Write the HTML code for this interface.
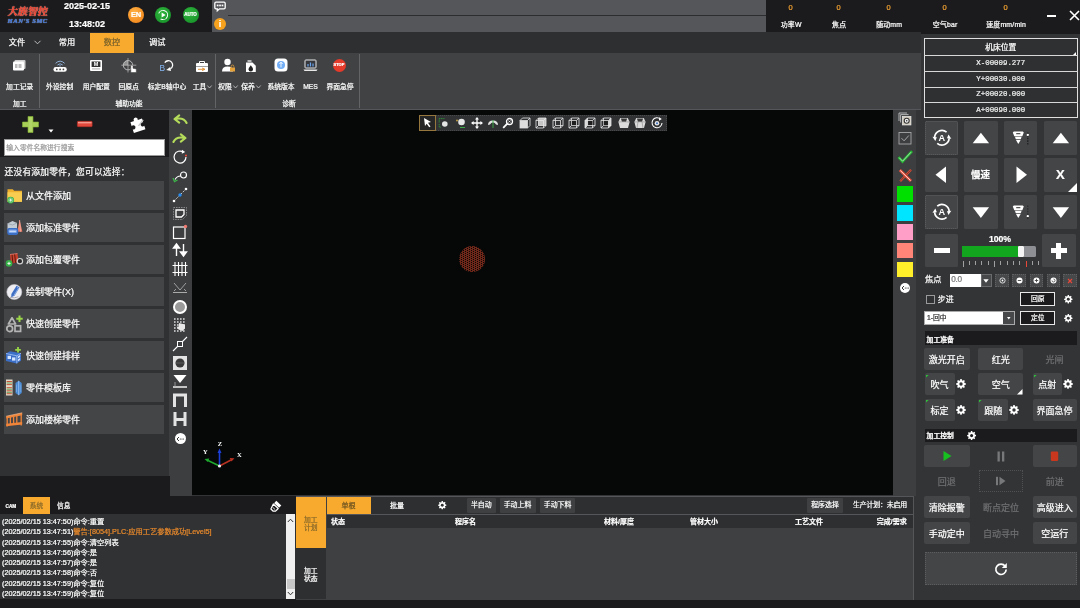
<!DOCTYPE html><html lang="zh"><head><meta charset="utf-8"><title>CNC</title><style>
*{box-sizing:border-box;margin:0;padding:0}
html,body{width:1080px;height:608px;overflow:hidden}
html{background:#333436}
body{position:relative;will-change:transform;font-family:"Liberation Sans","Noto Sans CJK SC",sans-serif;color:#fff;font-size:7px;line-height:1}
.a{position:absolute}
.d{background:#1b1b1d}
.t{position:absolute;white-space:nowrap;line-height:1;-webkit-text-stroke:0.22px}
.c{text-align:center}
.o{background:#f7aa2e}
.btn{position:absolute;background:#47484a;border-radius:2px;color:#fff;text-align:center;white-space:nowrap}
.mono{font-family:"Liberation Mono",monospace}
.serif{font-family:"Liberation Serif","Noto Serif CJK SC",serif}
svg{position:absolute;overflow:visible}
</style></head><body>
<div class="a d" style="left:0px;top:0px;width:1080px;height:32px;"></div>
<div class="a d" style="left:766px;top:0px;width:314px;height:32px;"></div>
<div class="a " style="left:212px;top:0px;width:554px;height:32.5px;background:#55565a"></div>
<div class="a " style="left:228px;top:15px;width:538px;height:1px;background:#2c2d2f"></div>
<div class="t serif" style="left:7.5px;top:6.5px;font-size:10px;color:#e8402d;font-weight:900;letter-spacing:0px;text-shadow:0 0 1px #fff;transform:skewX(-8deg)">大族智控</div>
<div class="t serif" style="left:7.5px;top:18px;font-size:6.6px;color:#3b6fd0;font-weight:bold;font-style:italic;letter-spacing:0.55px;text-shadow:0 0 1px #fff">HAN'S SMC</div>
<div class="t " style="left:62px;top:1.5px;font-size:9px;color:#fff;width:50px;text-align:center;font-weight:bold">2025-02-15</div>
<div class="t " style="left:62px;top:19.5px;font-size:9px;color:#fff;width:50px;text-align:center;font-weight:bold">13:48:02</div>
<div class="a" style="left:128px;top:6.5px;width:16px;height:16px;border-radius:50%;background:radial-gradient(circle at 40% 35%,#ffb347,#f07d12)"></div>
<div class="t " style="left:128px;top:11.4px;font-size:7.4px;color:#fff;width:16px;text-align:center;font-weight:bold;letter-spacing:-0.2px">EN</div>
<div class="a" style="left:154.5px;top:6.5px;width:16px;height:16px;border-radius:50%;background:radial-gradient(circle at 40% 35%,#2fb43c,#128c26)"></div>
<svg style="left:154.5px;top:6.5px" width="16" height="16" viewBox="0 0 16 16"><circle cx="8" cy="8" r="4.6" fill="none" stroke="#fff" stroke-width="1" stroke-dasharray="22 7" transform="rotate(200 8 8)"/><path d="M6.6 5.6 L10.6 8 L6.6 10.4Z" fill="#fff"/></svg>
<div class="a" style="left:182.5px;top:6.5px;width:16px;height:16px;border-radius:50%;background:radial-gradient(circle at 40% 35%,#2fb43c,#128c26)"></div>
<div class="t " style="left:182.5px;top:13.3px;font-size:4.5px;color:#fff;width:16px;text-align:center;font-weight:bold">AUTO</div>
<svg style="left:214px;top:1.4px" width="12" height="11" viewBox="0 0 12 11"><path d="M2 1.2h8a1.2 1.2 0 0 1 1.2 1.2v4.2a1.2 1.2 0 0 1-1.2 1.2H5.5L3.3 9.8V7.8H2A1.2 1.2 0 0 1 .8 6.6V2.4A1.2 1.2 0 0 1 2 1.2Z" fill="none" stroke="#fff" stroke-width="1.300"/><rect x="2.800" y="3.600" width="1.700" height="1.700" fill="#fff"/><rect x="5.200" y="3.600" width="1.700" height="1.700" fill="#fff"/><rect x="7.600" y="3.600" width="1.700" height="1.700" fill="#fff"/></svg>
<div class="a" style="left:214px;top:18.3px;width:12px;height:12px;border-radius:50%;background:#f6a21e"></div>
<div class="t " style="left:214px;top:19.5px;font-size:9px;color:#fff;width:12px;text-align:center;font-weight:bold">i</div>
<div class="t " style="left:760.5px;top:3.8px;font-size:7.5px;color:#f0a030;width:60px;text-align:center;">0</div>
<div class="t " style="left:761.2px;top:21.8px;font-size:6.9px;color:#fff;width:60px;text-align:center;letter-spacing:0.2px">功率W</div>
<div class="t " style="left:808.5px;top:3.8px;font-size:7.5px;color:#f0a030;width:60px;text-align:center;">0</div>
<div class="t " style="left:809.2px;top:21.8px;font-size:6.9px;color:#fff;width:60px;text-align:center;letter-spacing:0.2px">焦点</div>
<div class="t " style="left:858.5px;top:3.8px;font-size:7.5px;color:#f0a030;width:60px;text-align:center;">0</div>
<div class="t " style="left:859.2px;top:21.8px;font-size:6.9px;color:#fff;width:60px;text-align:center;letter-spacing:0.2px">随动mm</div>
<div class="t " style="left:914.5px;top:3.8px;font-size:7.5px;color:#f0a030;width:60px;text-align:center;">0</div>
<div class="t " style="left:915.2px;top:21.8px;font-size:6.9px;color:#fff;width:60px;text-align:center;letter-spacing:0.2px">空气bar</div>
<div class="t " style="left:975.5px;top:3.8px;font-size:7.5px;color:#f0a030;width:60px;text-align:center;">0</div>
<div class="t " style="left:976.2px;top:21.8px;font-size:6.9px;color:#fff;width:60px;text-align:center;letter-spacing:0.2px">速度mm/min</div>
<div class="a " style="left:1047px;top:15px;width:9px;height:2px;background:#fff"></div>
<svg style="left:1069px;top:10px" width="11" height="11" viewBox="0 0 11 11"><path d="M1 1L10 10M10 1L1 10" stroke="#fff" stroke-width="1.6"/></svg>
<div class="a " style="left:0px;top:32px;width:1080px;height:21px;background:#2e2f31"></div>
<div class="t " style="left:8.8px;top:38.5px;font-size:8.2px;color:#fff;">文件</div>
<svg style="left:34px;top:40px" width="7" height="5" viewBox="0 0 7 5"><path d="M0.5 0.8L3.5 3.8L6.5 0.8" fill="none" stroke="#ccc" stroke-width="0.9"/></svg>
<div class="t " style="left:58.8px;top:38.5px;font-size:8.2px;color:#fff;">常用</div>
<div class="a o" style="left:90px;top:33px;width:44px;height:20px;"></div>
<div class="t " style="left:90px;top:38.5px;font-size:8.2px;color:#77602a;width:44px;text-align:center;">数控</div>
<div class="t " style="left:149px;top:38.5px;font-size:8.2px;color:#fff;">调试</div>
<div class="a " style="left:0px;top:53px;width:921px;height:56px;background:#414244"></div>
<div class="a " style="left:0px;top:109px;width:921px;height:1px;background:#55565a"></div>
<div class="a " style="left:39.3px;top:54px;width:1.2px;height:54px;background:#636466"></div>
<div class="a " style="left:215.3px;top:54px;width:1.2px;height:54px;background:#636466"></div>
<div class="a " style="left:359.3px;top:54px;width:1.2px;height:54px;background:#636466"></div>
<div class="t " style="left:-20.3px;top:83.5px;font-size:6.8px;color:#fff;width:80px;text-align:center;">加工记录</div>
<div class="t " style="left:-20.3px;top:100.6px;font-size:6.8px;color:#fff;width:80px;text-align:center;">加工</div>
<div class="t " style="left:19.6px;top:83.5px;font-size:6.8px;color:#fff;width:80px;text-align:center;">外设控制</div>
<div class="t " style="left:56.3px;top:83.5px;font-size:6.8px;color:#fff;width:80px;text-align:center;">用户配置</div>
<div class="t " style="left:88.69999999999999px;top:83.5px;font-size:6.8px;color:#fff;width:80px;text-align:center;">回原点</div>
<div class="t " style="left:127px;top:83.5px;font-size:6.8px;color:#fff;width:80px;text-align:center;">标定B轴中心</div>
<div class="t " style="left:159.5px;top:83.5px;font-size:6.8px;color:#fff;width:80px;text-align:center;">工具</div>
<svg style="left:207px;top:85px" width="5" height="4" viewBox="0 0 5 4"><path d="M0.3 0.5L2.5 3L4.7 0.5" fill="none" stroke="#ddd" stroke-width="0.7"/></svg>
<div class="t " style="left:89px;top:100.6px;font-size:6.8px;color:#fff;width:80px;text-align:center;">辅助功能</div>
<div class="t " style="left:185px;top:83.5px;font-size:6.8px;color:#fff;width:80px;text-align:center;">权限</div>
<svg style="left:233px;top:85px" width="5" height="4" viewBox="0 0 5 4"><path d="M0.3 0.5L2.5 3L4.7 0.5" fill="none" stroke="#ddd" stroke-width="0.7"/></svg>
<div class="t " style="left:208px;top:83.5px;font-size:6.8px;color:#fff;width:80px;text-align:center;">保养</div>
<svg style="left:256px;top:85px" width="5" height="4" viewBox="0 0 5 4"><path d="M0.3 0.5L2.5 3L4.7 0.5" fill="none" stroke="#ddd" stroke-width="0.7"/></svg>
<div class="t " style="left:241px;top:83.5px;font-size:6.8px;color:#fff;width:80px;text-align:center;">系统版本</div>
<div class="t " style="left:270.5px;top:83.5px;font-size:6.8px;color:#fff;width:80px;text-align:center;">MES</div>
<div class="t " style="left:300px;top:83.5px;font-size:6.8px;color:#fff;width:80px;text-align:center;">界面急停</div>
<div class="t " style="left:249px;top:100.6px;font-size:6.8px;color:#fff;width:80px;text-align:center;">诊断</div>
<svg style="left:12px;top:59px" width="14" height="13" viewBox="0 0 14 13"><rect x="2.5" y="1" width="11" height="9" rx="1" fill="#cfcfcf"/><rect x="1" y="2.5" width="11" height="9" rx="1" fill="#fff"/><path d="M3 6h2.5M6.5 6h3M3 8h2.5M6.5 8h3" stroke="#555" stroke-width="0.8"/></svg>
<svg style="left:52.5px;top:58.5px" width="14" height="13" viewBox="0 0 14 13"><rect x="0.400" y="8" width="13.400" height="4.800" rx="2.400" fill="#fff"/><circle cx="3.800" cy="10.400" r="0.850" fill="#444"/><circle cx="7.100" cy="10.400" r="0.850" fill="#444"/><circle cx="10.400" cy="10.400" r="0.850" fill="#444"/><path d="M2.600 4.300Q7.100 0 11.600 4.300" fill="none" stroke="#8fb0d8" stroke-width="1"/><path d="M4.500 6Q7.100 3.500 9.700 6" fill="none" stroke="#8fb0d8" stroke-width="1"/><circle cx="7.100" cy="6.900" r="0.700" fill="#8fb0d8"/></svg>
<svg style="left:89px;top:59px" width="14" height="13" viewBox="0 0 14 13"><rect x="1" y="1" width="12" height="11" rx="1" fill="#fff"/><rect x="2.6" y="2.5" width="8.8" height="5.5" fill="#333"/><text x="7" y="7.4" font-size="5.5" font-weight="bold" fill="#fff" text-anchor="middle" font-family="Liberation Sans,sans-serif">M</text><rect x="3" y="9.3" width="8" height="1.2" fill="#bbb"/></svg>
<svg style="left:121px;top:57.5px" width="16" height="15" viewBox="0 0 16 15"><circle cx="7" cy="7.200" r="4.700" fill="none" stroke="#c4c4c4" stroke-width="0.900"/><path d="M7 0v14.500M0.300 7.200h15" stroke="#b0b0b0" stroke-width="0.800"/><path d="M7 7.200V2.500A4.700 4.700 0 0 0 2.300 7.200Z" fill="#d0d0d0" opacity="0.550"/><path d="M9.800 8.200v6.300h5.500v-3.600l-3.300-.6V8.200a1.100 1.100 0 0 0-2.200 0Z" fill="#fff" stroke="#3a3a3a" stroke-width="0.500"/></svg>
<svg style="left:159px;top:57.5px" width="16" height="15" viewBox="0 0 16 15"><path d="M5.800 4.600A4.300 4.300 0 1 1 11.400 10.800" fill="none" stroke="#fff" stroke-width="1.300"/><path d="M7.200 11.900l4-2.900.8 4Z" fill="#fff"/><text x="0.400" y="13" font-size="8.400" fill="#86b8f4" font-family="Liberation Sans,sans-serif">B</text></svg>
<svg style="left:195px;top:60px" width="14" height="13" viewBox="0 0 14 13"><rect x="1" y="3" width="12" height="9" rx="1" fill="#fff"/><path d="M4.5 3V1.5h5V3" fill="none" stroke="#fff" stroke-width="1"/><rect x="1" y="6.2" width="12" height="0.8" fill="#888"/><path d="M3 9.3h6M7 8l3 1.3-3 1.3" stroke="#e08a2a" stroke-width="0.9" fill="none"/></svg>
<svg style="left:221px;top:58px" width="15" height="15" viewBox="0 0 15 15"><circle cx="6.5" cy="4" r="3.2" fill="#fff"/><path d="M1 13.5q0-5 5.5-5t5.5 5Z" fill="#fff"/><rect x="9" y="9.5" width="5" height="4" fill="#e6a23a"/><path d="M10.2 9.5v-1.2a1.3 1.3 0 0 1 2.6 0v1.2" fill="none" stroke="#e6a23a" stroke-width="0.7"/></svg>
<svg style="left:245px;top:59px" width="12" height="14" viewBox="0 0 12 14"><path d="M1 3.5h6.5L10.8 6.8V13H1Z" fill="#fff"/><rect x="2.5" y="1" width="4" height="2" fill="#bbb"/><path d="M5.8 6.2q2.2 2.6 2.2 4a2.2 2.2 0 0 1-4.4 0q0-1.4 2.2-4Z" fill="#222"/></svg>
<svg style="left:274px;top:58px" width="14" height="14" viewBox="0 0 14 14"><rect x="0.5" y="0.5" width="13" height="13" rx="3.5" fill="#fff"/><circle cx="7" cy="7" r="4" fill="#72aef5"/><path d="M7 4.2v5.2M5.4 6L7 4.2L8.6 6" stroke="#fff" stroke-width="0.9" fill="none"/></svg>
<svg style="left:303px;top:59px" width="15" height="13" viewBox="0 0 15 13"><rect x="2" y="1" width="11" height="8" rx="0.8" fill="#35373c" stroke="#e8e8e8" stroke-width="1"/><path d="M0.5 10.5h14l-1 1.5h-12Z" fill="#e8e8e8"/><path d="M5 7.5V5M7.5 7.5V3.5M10 7.5V4.5" stroke="#6aa5ee" stroke-width="1.2"/></svg>
<div class="a" style="left:332.5px;top:58.5px;width:13px;height:13px;border-radius:50%;background:#e63a2b"></div>
<div class="t " style="left:332.5px;top:63px;font-size:4px;color:#fff;width:13px;text-align:center;font-weight:bold">STOP</div>
<div class="a " style="left:0px;top:110px;width:169px;height:386px;background:#303133"></div>
<div class="a d" style="left:0px;top:109.5px;width:169px;height:47.5px;"></div>
<svg style="left:22px;top:116px" width="17" height="17" viewBox="0 0 17 17"><path d="M6 0.5h5v5.5h5.5v5H11v5.5H6V11H0.5V6H6Z" fill="#a8cf58" stroke="#86b336" stroke-width="0.600"/><path d="M7 1.500h3v14h-3Z" fill="#b9dc74" opacity="0.500"/></svg>
<svg style="left:48px;top:129px" width="6" height="4" viewBox="0 0 6 4"><path d="M0.5 0.5h5L3 3.5Z" fill="#fff"/></svg>
<svg style="left:76.5px;top:120.7px" width="16" height="6" viewBox="0 0 16 6"><rect x="0.300" y="0.300" width="14.900" height="5.400" rx="0.800" fill="#e2483c" stroke="#b02a22" stroke-width="0.500"/><rect x="1" y="0.900" width="13.500" height="1.500" fill="#f39a8e"/></svg>
<svg style="left:129.5px;top:116px" width="15" height="16" viewBox="0 0 15 16"><g transform="rotate(-18 7.500 8)"><path d="M5.200 4.200a2.100 2.100 0 1 1 3.800 0H13.400v4a2.100 2.100 0 1 0 0 3.600V15.500H1.300v-3.800a2.100 2.100 0 1 0 0-3.400V4.200Z" fill="#fff"/></g><path d="M13.200 3.800L8.500 9.800" stroke="#c4c4c4" stroke-width="1.300"/></svg>
<div class="a " style="left:4px;top:139px;width:161px;height:17px;background:#fff;border:1px solid #9a9a9a"></div>
<div class="t " style="left:6.3px;top:145px;font-size:6.8px;color:#9a9a9a;">输入零件名称进行搜索</div>
<div class="t " style="left:4.5px;top:168.4px;font-size:8.7px;color:#fff;letter-spacing:0.25px">还没有添加零件，您可以选择：</div>
<div class="a " style="left:4px;top:181px;width:160px;height:29px;background:#444547"></div>
<div class="t " style="left:26px;top:191.8px;font-size:9px;color:#fff;">从文件添加</div>
<div class="a " style="left:4px;top:213px;width:160px;height:29px;background:#444547"></div>
<div class="t " style="left:26px;top:223.8px;font-size:9px;color:#fff;">添加标准零件</div>
<div class="a " style="left:4px;top:245px;width:160px;height:29px;background:#444547"></div>
<div class="t " style="left:26px;top:255.8px;font-size:9px;color:#fff;">添加包覆零件</div>
<div class="a " style="left:4px;top:277px;width:160px;height:29px;background:#444547"></div>
<div class="t " style="left:26px;top:287.8px;font-size:9px;color:#fff;">绘制零件(X)</div>
<div class="a " style="left:4px;top:309px;width:160px;height:29px;background:#444547"></div>
<div class="t " style="left:26px;top:319.8px;font-size:9px;color:#fff;">快速创建零件</div>
<div class="a " style="left:4px;top:341px;width:160px;height:29px;background:#444547"></div>
<div class="t " style="left:26px;top:351.8px;font-size:9px;color:#fff;">快速创建排样</div>
<div class="a " style="left:4px;top:373px;width:160px;height:29px;background:#444547"></div>
<div class="t " style="left:26px;top:383.8px;font-size:9px;color:#fff;">零件模板库</div>
<div class="a " style="left:4px;top:405px;width:160px;height:29px;background:#444547"></div>
<div class="t " style="left:26px;top:415.8px;font-size:9px;color:#fff;">添加楼梯零件</div>
<svg style="left:5px;top:186.5px" width="18" height="18" viewBox="0 0 18 18"><path d="M2.500 2.200h5.200l1.500 1.600H17V14.800H2.500Z" fill="#eeb02e"/><path d="M2.500 5.200H17v9.600H2.500Z" fill="#f8cc50"/><circle cx="5.700" cy="13.100" r="3.400" fill="#35b046"/><circle cx="5.700" cy="13.100" r="2.300" fill="none" stroke="#bfe8c4" stroke-width="0.500"/><path d="M5.700 11.500v3.200M4.100 13.100h3.200" stroke="#fff" stroke-width="0.900"/></svg>
<svg style="left:5px;top:218.5px" width="18" height="18" viewBox="0 0 18 18"><path d="M2.500 4.500l5-2.400 4.500 1.800v6.800H2.500Z" fill="#c4ccd4"/><path d="M2.500 4.500l5 1.500 4.500-2.100" fill="none" stroke="#8a949e" stroke-width="0.600"/><path d="M14.600 1l2.800 11.700h-5.200Z" fill="#e77f6a"/><path d="M14.600 1l.9 11.700" stroke="#f5b3a4" stroke-width="0.800"/><rect x="2.200" y="8.900" width="11" height="7" rx="1.800" fill="#3c6fc6"/><rect x="3.600" y="10.500" width="8.200" height="3.600" rx="1" fill="#7fa8ea"/><path d="M4.500 12.300h6.400" stroke="#e4eeff" stroke-width="0.900"/></svg>
<svg style="left:5px;top:250.5px" width="18" height="18" viewBox="0 0 18 18"><path d="M5 3.500l7.500-1 1.200 8.500-7.800 1.800Z" fill="#c7412d"/><path d="M7 3.300l.9 9M9.600 2.900l1 9" stroke="#5e1a10" stroke-width="1"/><path d="M5 3.500l7.500-1" stroke="#ef8a78" stroke-width="0.700"/><circle cx="14.900" cy="10.200" r="2.700" fill="#2a2a2a" stroke="#cfcfcf" stroke-width="1.200"/><circle cx="4" cy="12.400" r="3.300" fill="#35b046"/><path d="M4 10.800v3.200M2.400 12.400h3.200" stroke="#fff" stroke-width="0.900"/></svg>
<svg style="left:5px;top:282.5px" width="18" height="18" viewBox="0 0 18 18"><circle cx="9.300" cy="9" r="7.500" fill="#eeeef2"/><circle cx="9.300" cy="9" r="7.500" fill="none" stroke="#c8c8d0" stroke-width="0.600"/><path d="M11.500 2.800l3 1.800-5 8.200-3.300 1.500.2-3.400Z" fill="#3f6fc4"/><path d="M12 4.300l1.500.9-4.600 7.300" fill="none" stroke="#a9c4f0" stroke-width="0.700"/><path d="M5 14.300q4.500 1.300 8.500-.6" stroke="#9a9aa4" stroke-width="0.800" fill="none"/></svg>
<svg style="left:5px;top:314.5px" width="18" height="18" viewBox="0 0 18 18"><path d="M7 2.800l3.600 6.200H3.400Z" fill="none" stroke="#b4b4b4" stroke-width="1.700" stroke-linejoin="round"/><circle cx="4.700" cy="13.700" r="2.900" fill="none" stroke="#b4b4b4" stroke-width="1.700"/><rect x="10" y="10.800" width="5.600" height="5.600" fill="none" stroke="#b4b4b4" stroke-width="1.700"/><path d="M14.500 0.500v6.400M11.300 3.700h6.400" stroke="#9ad648" stroke-width="2"/></svg>
<svg style="left:5px;top:346.5px" width="18" height="18" viewBox="0 0 18 18"><path d="M1 6.500l4-2.300 11 2v7.600l-4.200 2.600L1 14Z" fill="#3b6fc7"/><path d="M1 6.500l10.800 2.300V16.400" fill="none" stroke="#a9c6f6" stroke-width="0.800"/><path d="M11.800 8.800L16 6.200" stroke="#a9c6f6" stroke-width="0.800"/><rect x="2.600" y="8.800" width="3.400" height="3.200" fill="#d4e3ff"/><rect x="7" y="10.400" width="3.400" height="3.200" fill="#d4e3ff"/><path d="M12.800 9.500l2.300-1.400v2l-2.300 1.400ZM12.800 12.500l2.300-1.400v2l-2.300 1.400Z" fill="#d4e3ff"/><path d="M13 0v5.600M10.200 2.800h5.600" stroke="#9ad648" stroke-width="1.800"/></svg>
<svg style="left:5px;top:378.5px" width="18" height="18" viewBox="0 0 18 18"><rect x="1" y="0.500" width="6.500" height="16" fill="#ddd8c8"/><path d="M1.600 2.500h5.300M1.600 5.600h5.300M1.600 8.700h5.300M1.600 11.800h5.300M1.600 14.700h5.300" stroke="#c4553a" stroke-width="1"/><path d="M1.600 4h5.300M1.600 10.200h5.300M1.600 13.300h5.300" stroke="#5b9a4c" stroke-width="0.900"/><path d="M10.500 4l3.200-2.200 3 2.200v10l-3 2.200-3.200-2.200Z" fill="#4a8bd6"/><path d="M13.700 1.800v14.400" stroke="#b4d3f7" stroke-width="0.700"/><path d="M11.500 5.500v7.500M15.800 5.500v7.500" stroke="#8ab8ee" stroke-width="0.600"/></svg>
<svg style="left:5px;top:410.5px" width="18" height="18" viewBox="0 0 18 18"><path d="M1.200 5.200L17.200 1.800v2.400L1.200 7.600Z" fill="#f0853a"/><path d="M1.200 12.800L17.200 11v2.400L1.200 15.200Z" fill="#f0853a"/><path d="M2.200 6v9.500M5.400 6v7.500M8.600 5.500v7.500M11.800 4.800v7.700M16.200 3v11.500" stroke="#f0853a" stroke-width="1.300"/><path d="M1.200 5.200L17.200 1.800" stroke="#f9c39a" stroke-width="0.600"/></svg>
<div class="a " style="left:169px;top:110px;width:23px;height:386px;background:#3d3e40"></div>
<svg style="left:172px;top:111px" width="16" height="16" viewBox="0 0 16 16"><path d="M7.200 4.300L2.500 8l4.700 3.600M2.800 8Q12 6 14.600 12" fill="none" stroke="#b4dc5a" stroke-width="2.100" stroke-linecap="round" stroke-linejoin="round"/></svg>
<svg style="left:172px;top:130px" width="16" height="16" viewBox="0 0 16 16"><path d="M8.800 4.300L13.500 8l-4.700 3.600M13.200 8Q4 6 1.400 12" fill="none" stroke="#b4dc5a" stroke-width="2.100" stroke-linecap="round" stroke-linejoin="round"/></svg>
<svg style="left:172px;top:149px" width="16" height="16" viewBox="0 0 16 16"><path d="M11.5 3.2A6 6 0 1 0 14 8" fill="none" stroke="#fff" stroke-width="1.2"/><path d="M10 0.8l3.2 2.2-3.4 1.8Z" fill="#fff"/><circle cx="14" cy="6.5" r="1.1" fill="#e8483a"/></svg>
<svg style="left:172px;top:169.3px" width="16" height="16" viewBox="0 0 16 16"><circle cx="11.5" cy="6" r="3" fill="none" stroke="#fff" stroke-width="1.2"/><path d="M8.5 7Q5 7 3 10.5" fill="none" stroke="#fff" stroke-width="1.2"/><path d="M1 9l1.5 3.5 3-1.5" fill="none" stroke="#3db54a" stroke-width="1.3"/></svg>
<svg style="left:172px;top:187px" width="16" height="16" viewBox="0 0 16 16"><path d="M2 14L14 2" stroke="#ddd" stroke-width="0.9" stroke-dasharray="2 1.2"/><circle cx="2" cy="14" r="1.3" fill="#fff"/><circle cx="14" cy="2" r="1.3" fill="#fff"/><circle cx="8" cy="8" r="1.7" fill="#2a8df0"/></svg>
<svg style="left:172px;top:205px" width="16" height="16" viewBox="0 0 16 16"><path d="M1.5 2.5h13v8l-4 4h-9Z" fill="none" stroke="#aaa" stroke-width="0.7" stroke-dasharray="1.5 1"/><path d="M4 5h8v4.5l-2.5 2.5H4Z" fill="none" stroke="#fff" stroke-width="1.3"/></svg>
<svg style="left:172px;top:224px" width="16" height="16" viewBox="0 0 16 16"><rect x="1.5" y="3" width="11.5" height="11.5" fill="none" stroke="#fff" stroke-width="1.2"/><circle cx="13.5" cy="2.5" r="1.7" fill="#f07a70"/></svg>
<svg style="left:172px;top:242px" width="16" height="16" viewBox="0 0 16 16"><path d="M4.5 14V3M1.5 6l3-4 3 4Z M11.5 2v11M8.5 10l3 4 3-4Z" fill="#fff" stroke="#fff" stroke-width="1.4"/></svg>
<svg style="left:172px;top:261px" width="16" height="16" viewBox="0 0 16 16"><path d="M3 1v14M6.5 1v14M10 1v14M13.5 1v14M0.5 4.5h15M0.5 11.5h15" stroke="#fff" stroke-width="1.1" fill="none"/></svg>
<svg style="left:172px;top:280px" width="16" height="16" viewBox="0 0 16 16"><path d="M1 12.5h14" stroke="#aaa" stroke-width="1"/><path d="M2 3l6 7 6-7M4 9l-2 2M12 9l2 2" stroke="#aaa" stroke-width="0.9" fill="none"/></svg>
<svg style="left:172px;top:299px" width="16" height="16" viewBox="0 0 16 16"><circle cx="8" cy="8" r="6" fill="#9a9a9a" stroke="#fff" stroke-width="2"/></svg>
<svg style="left:172px;top:317px" width="16" height="16" viewBox="0 0 16 16"><path d="M2 2h12M2 5h12M2 8h12M2 11h12M2 14h12" stroke="#ddd" stroke-width="1.4" stroke-dasharray="1.6 1.4"/><path d="M7 6l6 1.5v4l-2.5 2.5-4-1.5-2-3 2 .3Z" fill="#e8e8e8"/></svg>
<svg style="left:172px;top:336px" width="16" height="16" viewBox="0 0 16 16"><path d="M1 15L15 1" stroke="#fff" stroke-width="1.1"/><rect x="5.5" y="5.5" width="5" height="5" fill="#3d3e40" stroke="#fff" stroke-width="1"/></svg>
<svg style="left:172px;top:355px" width="16" height="16" viewBox="0 0 16 16"><rect x="1" y="1" width="14" height="14" fill="#e4e4e4"/><circle cx="8" cy="8" r="4.5" fill="#3a3a3a"/><path d="M3.5 8h9" stroke="#666" stroke-width="0.8"/></svg>
<svg style="left:172px;top:373px" width="16" height="16" viewBox="0 0 16 16"><path d="M1.5 2h13L8 10Z" fill="#fff"/><path d="M1 14h14" stroke="#fff" stroke-width="1.4"/><path d="M3 9v5" stroke="#aaa" stroke-width="0.8"/></svg>
<svg style="left:172px;top:392px" width="16" height="16" viewBox="0 0 16 16"><path d="M2.5 15V3h11v12" fill="none" stroke="#e4e4e4" stroke-width="3"/></svg>
<svg style="left:172px;top:411px" width="16" height="16" viewBox="0 0 16 16"><path d="M3 1v14M13 1v14M3 8.5h10" fill="none" stroke="#e4e4e4" stroke-width="3"/></svg>
<div class="a" style="left:174.8px;top:433.1px;width:11px;height:11px;border-radius:50%;background:#fff"></div>
<svg style="left:175.3px;top:433.6px" width="10" height="10" viewBox="0 0 10 10"><path d="M4 3L2 5l2 2" fill="none" stroke="#222" stroke-width="0.9"/><circle cx="5.3" cy="5" r="0.6" fill="#222"/><circle cx="7" cy="5" r="0.6" fill="#222"/><circle cx="8.5" cy="5" r="0.5" fill="#222"/></svg>
<div class="a " style="left:192px;top:110px;width:701px;height:384.5px;background:#050807"></div>
<div class="a " style="left:418.5px;top:114.5px;width:248px;height:16.7px;background:#313234;border:1px dotted #48494b"></div>
<div class="a " style="left:419px;top:114.8px;width:16.7px;height:16.2px;border:1px solid #96783f;background:#262626"></div>
<svg style="left:422px;top:117px" width="11" height="11" viewBox="0 0 11 11"><path d="M2 1l7 4-3 .8 2.5 3.6-1.3.9L4.7 6.7 3 9Z" fill="#fff"/></svg>
<svg style="left:438px;top:117px" width="12" height="12" viewBox="0 0 12 12"><circle cx="6.800" cy="7" r="2.800" fill="#e4e4e4"/><path d="M1.200 5.500V1.600h5.500" fill="none" stroke="#2fae3c" stroke-width="0.800" stroke-dasharray="1.200 0.600"/><path d="M1.200 7v3.200h2" fill="none" stroke="#2fae3c" stroke-width="0.700" stroke-dasharray="1.200 0.600"/></svg>
<svg style="left:455px;top:117px" width="12" height="12" viewBox="0 0 12 12"><circle cx="6.5" cy="5" r="3.3" fill="#e8e8e8"/><circle cx="2" cy="3.5" r="0.9" fill="#caa84a"/><path d="M5 10.5h5" stroke="#3db54a" stroke-width="0.9"/></svg>
<svg style="left:471px;top:117px" width="12" height="12" viewBox="0 0 12 12"><path d="M6 1.500v9M1.500 6h9" stroke="#fff" stroke-width="1.300"/><path d="M6 0L8 2.600H4ZM6 12L8 9.400H4ZM0 6L2.600 4v4ZM12 6L9.400 4v4Z" fill="#fff"/></svg>
<svg style="left:487px;top:117px" width="12" height="12" viewBox="0 0 12 12"><path d="M1 8q0-4.500 5-4.500T11 8L9 7.500q-1-2-3-2t-3 2Z" fill="#e0e0e0"/><path d="M6 3v8" stroke="#3db54a" stroke-width="0.9"/></svg>
<svg style="left:502px;top:117px" width="12" height="12" viewBox="0 0 12 12"><circle cx="7.500" cy="4.500" r="3" fill="none" stroke="#fff" stroke-width="1.300"/><path d="M5.300 6.700L1.200 10.800" stroke="#fff" stroke-width="1.800"/><path d="M6.300 3.500l2.400 2M8.700 3.500l-2.400 2" stroke="#fff" stroke-width="0.600"/></svg>
<svg style="left:519px;top:117px" width="12" height="12" viewBox="0 0 12 12"><path d="M1 3.500L3.500 1H11v7.500L8.500 11" fill="none" stroke="#e6e6e6" stroke-width="0.800"/><path d="M8.500 3.500L11 1" stroke="#e6e6e6" stroke-width="0.800"/><path d="M0.600 3.100h8.300v8.300H0.600Z" fill="#dedede"/></svg>
<svg style="left:535px;top:117px" width="12" height="12" viewBox="0 0 12 12"><path d="M3.500 1H11v7.500H3.500Z" fill="#c4c4c4"/><path d="M1 3.500h7.500V11H1ZM3.500 1H11v7.500H3.500ZM1 3.500L3.500 1M8.500 3.500L11 1M8.500 11L11 8.500M1 11L3.500 8.500" fill="none" stroke="#e6e6e6" stroke-width="0.800"/></svg>
<svg style="left:552px;top:117px" width="12" height="12" viewBox="0 0 12 12"><path d="M1 3.500h7.500V11H1ZM3.500 1H11v7.500H3.500ZM1 3.500L3.500 1M8.500 3.500L11 1M8.500 11L11 8.500M1 11L3.500 8.500" fill="none" stroke="#e6e6e6" stroke-width="0.800"/></svg>
<svg style="left:568px;top:117px" width="12" height="12" viewBox="0 0 12 12"><path d="M1 3.500h7.500V11H1ZM3.500 1H11v7.500H3.500ZM1 3.500L3.500 1M8.500 3.500L11 1M8.500 11L11 8.500M1 11L3.500 8.500" fill="none" stroke="#e6e6e6" stroke-width="0.800"/><path d="M3.500 3.500h5v5h-5Z" fill="#1e1e1e" stroke="#e6e6e6" stroke-width="0.600"/></svg>
<svg style="left:584px;top:117px" width="12" height="12" viewBox="0 0 12 12"><path d="M1 3.500L3.500 1v7.500L1 11Z" fill="#d8d8d8"/><path d="M1 3.500h7.500V11H1ZM3.500 1H11v7.500H3.500ZM1 3.500L3.500 1M8.500 3.500L11 1M8.500 11L11 8.500M1 11L3.500 8.500" fill="none" stroke="#e6e6e6" stroke-width="0.800"/><path d="M4.500 4h4v4h-4Z" fill="#1e1e1e"/></svg>
<svg style="left:600px;top:117px" width="12" height="12" viewBox="0 0 12 12"><path d="M8.500 3.500L11 1v7.500L8.500 11Z" fill="#d8d8d8"/><path d="M1 3.500h7.500V11H1ZM3.500 1H11v7.500H3.500ZM1 3.500L3.500 1M8.500 3.500L11 1M8.500 11L11 8.500M1 11L3.500 8.500" fill="none" stroke="#e6e6e6" stroke-width="0.800"/><path d="M3.800 4.200h4v4h-4Z" fill="#1e1e1e"/></svg>
<svg style="left:618px;top:117px" width="12" height="12" viewBox="0 0 12 12"><path d="M2.200 1h7.600l1.800 4-1.600 6H2L0.400 5Z" fill="#dcdcdc"/><path d="M2.800 1.500h6.400L8 4.800H4Z" fill="#3a3a3a"/><path d="M0.400 5L4 4.800h4L11.600 5" fill="none" stroke="#8a8a8a" stroke-width="0.600"/></svg>
<svg style="left:634px;top:117px" width="12" height="12" viewBox="0 0 12 12"><path d="M2.200 1h7.600l1.800 4-1.600 6H2L0.400 5Z" fill="#dcdcdc"/><path d="M2.800 1.500h6.400L8 4.800H4Z" fill="#3a3a3a"/><path d="M0.400 5L4 4.800h4L11.600 5M4 4.800L3 11M8 4.800L9 11" fill="none" stroke="#8a8a8a" stroke-width="0.600"/></svg>
<svg style="left:651px;top:117px" width="12" height="12" viewBox="0 0 12 12"><path d="M9.500 2.200A5 5 0 1 0 11 6" fill="none" stroke="#fff" stroke-width="1.100"/><path d="M8 0.300l2.800 1.800-2.800 1.700Z" fill="#fff"/><circle cx="6" cy="6.300" r="2.300" fill="#e8e8e8"/><circle cx="6" cy="6.300" r="1" fill="#3a6fc0"/></svg>
<svg style="left:459px;top:246px" width="26" height="26" viewBox="0 0 26 26"><defs><pattern id="rd" width="4" height="2" patternUnits="userSpaceOnUse"><rect width="4" height="2" fill="#6f2719"/><rect x="0" y="0" width="1" height="1" fill="#0a0807" shape-rendering="crispEdges"/><rect x="2" y="1" width="1" height="1" fill="#0a0807" shape-rendering="crispEdges"/></pattern></defs><circle cx="13.1" cy="13.1" r="13" fill="url(#rd)"/></svg>
<svg style="left:200px;top:438px" width="46" height="32" viewBox="0 0 46 32"><path d="M19.500 28V14" stroke="#1c3fd8" stroke-width="1.600"/><path d="M19.500 10.500l-2 4.500h4Z" fill="#1c3fd8"/><path d="M19.500 28L8 22.500" stroke="#1faa2f" stroke-width="1.500"/><path d="M4.500 21l4.800-.5-1.600 3.400Z" fill="#1faa2f"/><path d="M19.500 28L31 22" stroke="#b83222" stroke-width="1.500"/><path d="M34.500 20.300l-4.800-.2 1.800 3.300Z" fill="#b83222"/><circle cx="19.500" cy="28" r="1.600" fill="#eee"/><text x="17.800" y="8" font-size="6.500" fill="#fff" font-weight="bold" font-family="Liberation Serif,serif">Z</text><text x="3" y="16" font-size="6.500" fill="#fff" font-weight="bold" font-family="Liberation Serif,serif">Y</text><text x="37" y="19" font-size="6.500" fill="#fff" font-weight="bold" font-family="Liberation Serif,serif">X</text></svg>
<div class="a " style="left:893px;top:110px;width:23px;height:386.5px;background:#3d3e40"></div>
<div class="a " style="left:916px;top:110px;width:5px;height:386px;background:#333436"></div>
<svg style="left:898px;top:112px" width="14" height="14" viewBox="0 0 14 14"><path d="M1 9V1h8" fill="none" stroke="#d0d0d0" stroke-width="0.800"/><path d="M2.600 10.500V2.600h8" fill="none" stroke="#d0d0d0" stroke-width="0.800"/><rect x="4.300" y="4.300" width="8.700" height="8.700" fill="#d2cbbd" stroke="#f0f0f0" stroke-width="0.600"/><circle cx="8.700" cy="8.700" r="2.500" fill="#f4f4f4" stroke="#333" stroke-width="1.100"/><circle cx="8.700" cy="8.700" r="0.800" fill="#333"/></svg>
<svg style="left:898px;top:131px" width="14" height="14" viewBox="0 0 14 14"><rect x="1" y="1.500" width="12" height="11.500" fill="none" stroke="#a6a6a6" stroke-width="0.900"/><path d="M3.500 7.200l2.600 2.600L10.800 4.500" fill="none" stroke="#a6a6a6" stroke-width="1"/></svg>
<svg style="left:897px;top:149px" width="16" height="15" viewBox="0 0 16 15"><path d="M1.500 8.200l4 4.400L15 2.200" fill="none" stroke="#27b536" stroke-width="2.600"/><path d="M2.300 8.800l3.300 3.400L14 3.200" fill="none" stroke="#d8f5d8" stroke-width="0.700"/></svg>
<svg style="left:898px;top:168px" width="15" height="15" viewBox="0 0 15 15"><path d="M13 1.800L2.200 13.200" stroke="#d94a35" stroke-width="2.200"/><path d="M12.600 2.300L2.600 12.700" stroke="#4a2a25" stroke-width="0.600"/><path d="M1.800 2l11.200 11" stroke="#e8503c" stroke-width="2.800"/><path d="M2.300 2.500l10.200 10" stroke="#ffd8d0" stroke-width="1"/></svg>
<div class="a " style="left:896.8px;top:186.2px;width:15.9px;height:15.6px;background:#00e000"></div>
<div class="a " style="left:896.8px;top:205px;width:15.9px;height:15.6px;background:#00e5ff"></div>
<div class="a " style="left:896.8px;top:224px;width:15.9px;height:15.6px;background:#ff9ec6"></div>
<div class="a " style="left:896.8px;top:242.8px;width:15.9px;height:15.6px;background:#ff8578"></div>
<div class="a " style="left:896.8px;top:261.7px;width:15.9px;height:15.6px;background:#ffef2a"></div>
<div class="a" style="left:900px;top:283px;width:10px;height:10px;border-radius:50%;background:#fff"></div>
<svg style="left:900px;top:283px" width="10" height="10" viewBox="0 0 10 10"><path d="M4 3L2 5l2 2" fill="none" stroke="#222" stroke-width="0.900"/><circle cx="5.300" cy="5" r="0.600" fill="#222"/><circle cx="7" cy="5" r="0.600" fill="#222"/><circle cx="8.500" cy="5" r="0.500" fill="#222"/></svg>
<div class="a " style="left:0px;top:496px;width:921px;height:112px;background:#2e2f31"></div>
<div class="a d" style="left:0px;top:476px;width:169.5px;height:20px;"></div>
<div class="a d" style="left:0px;top:496px;width:296px;height:19px;"></div>
<div class="t " style="left:5.5px;top:504.6px;font-size:4.7px;color:#fff;font-weight:bold">CAM</div>
<div class="a o" style="left:23px;top:497px;width:27px;height:17.5px;"></div>
<div class="t " style="left:23px;top:503.3px;font-size:6.7px;color:#8a6a2a;width:27px;text-align:center;">系统</div>
<div class="t " style="left:57px;top:503.3px;font-size:6.7px;color:#fff;">信息</div>
<svg style="left:270px;top:499.5px" width="12" height="12" viewBox="0 0 12 12"><path d="M6.300 0.800l5 4.600-2.200 2.400-5-4.600Z" fill="#fff"/><path d="M3.300 4l4.900 4.500-2.600 2.700H3.200L0.900 9Z" fill="none" stroke="#fff" stroke-width="1.200" stroke-linejoin="round"/><path d="M2.600 7.200l2.600 2.400" stroke="#fff" stroke-width="0.900"/></svg>
<div class="a " style="left:0px;top:514.3px;width:286px;height:84.7px;background:#313234"></div>
<div class="t " style="left:2px;top:518.0px;font-size:7.25px;color:#fff;">(2025/02/15 13:47:50)命令:重置</div>
<div class="t " style="left:2px;top:528.25px;font-size:7.25px;color:#fff;">(2025/02/15 13:47:51)<span style="color:#e8892b">警告:[8054].PLC:应用工艺参数成功[Level5]</span></div>
<div class="t " style="left:2px;top:538.5px;font-size:7.25px;color:#fff;">(2025/02/15 13:47:55)命令:清空列表</div>
<div class="t " style="left:2px;top:548.75px;font-size:7.25px;color:#fff;">(2025/02/15 13:47:56)命令:是</div>
<div class="t " style="left:2px;top:559.0px;font-size:7.25px;color:#fff;">(2025/02/15 13:47:57)命令:是</div>
<div class="t " style="left:2px;top:569.25px;font-size:7.25px;color:#fff;">(2025/02/15 13:47:58)命令:否</div>
<div class="t " style="left:2px;top:579.5px;font-size:7.25px;color:#fff;">(2025/02/15 13:47:59)命令:复位</div>
<div class="t " style="left:2px;top:589.75px;font-size:7.25px;color:#fff;">(2025/02/15 13:47:59)命令:复位</div>
<div class="a " style="left:285.8px;top:514.3px;width:9.6px;height:84.7px;background:#f0f0f0"></div>
<div class="a " style="left:286.6px;top:579px;width:8px;height:10px;background:#c8c8c8"></div>
<svg style="left:287.1px;top:517.5px" width="7" height="5" viewBox="0 0 7 5"><path d="M0.800 4L3.500 1.200 6.200 4" fill="none" stroke="#333" stroke-width="1"/></svg>
<svg style="left:287.1px;top:591.3px" width="7" height="5" viewBox="0 0 7 5"><path d="M0.800 1L3.500 3.800 6.200 1" fill="none" stroke="#333" stroke-width="1"/></svg>
<div class="a d" style="left:0px;top:599px;width:1080px;height:9px;"></div>
<div class="a " style="left:296px;top:496px;width:618px;height:104px;background:#3f4042"></div>
<div class="a " style="left:296px;top:496px;width:625px;height:1px;background:#55565a"></div>
<div class="a o" style="left:296px;top:497px;width:29.6px;height:50.5px;"></div>
<div class="t " style="left:296px;top:516.5px;font-size:6.8px;color:#8a6a2a;width:29.6px;text-align:center;">加工</div>
<div class="t " style="left:296px;top:524.6px;font-size:6.8px;color:#8a6a2a;width:29.6px;text-align:center;">计划</div>
<div class="a " style="left:296px;top:548px;width:29.6px;height:51px;background:#2e2f31"></div>
<div class="t " style="left:296px;top:567.7px;font-size:6.8px;color:#fff;width:29.6px;text-align:center;">加工</div>
<div class="t " style="left:296px;top:575.7px;font-size:6.8px;color:#fff;width:29.6px;text-align:center;">状态</div>
<div class="a " style="left:326.5px;top:497px;width:587px;height:17px;background:#2e2f31"></div>
<div class="a o" style="left:326.5px;top:497px;width:44px;height:16.7px;"></div>
<div class="t " style="left:326.5px;top:502.2px;font-size:7px;color:#6a5020;width:44px;text-align:center;">单根</div>
<div class="t " style="left:375.5px;top:502.2px;font-size:7px;color:#fff;width:43px;text-align:center;">批量</div>
<svg style="left:437.75px;top:500.75px" width="8.5" height="8.5" viewBox="0 0 10 10"><path d="M4.300 0h1.400l.25 1.250.9.380 1.050-.7 1 1-.7 1.050.38.900L9.830 4.300v1.400l-1.250.25-.38.900.7 1.050-1 1-1.050-.7-.9.380L5.700 9.830H4.300l-.25-1.250-.9-.38-1.050.7-1-1 .7-1.050-.38-.9L.170 5.700V4.300l1.250-.25.38-.9-.7-1.050 1-1 1.050.7.900-.38Z" fill="#fff"/><circle cx="5" cy="5" r="1.700" fill="#2e2f31"/></svg>
<div class="a " style="left:467px;top:498px;width:28.5px;height:15px;background:#3f4042;border-radius:1px"></div>
<div class="t " style="left:467px;top:502.2px;font-size:6.9px;color:#fff;width:28.5px;text-align:center;">半自动</div>
<div class="a " style="left:499.5px;top:498px;width:36px;height:15px;background:#3f4042;border-radius:1px"></div>
<div class="t " style="left:499.5px;top:502.2px;font-size:6.9px;color:#fff;width:36px;text-align:center;">手动上料</div>
<div class="a " style="left:539.8px;top:498px;width:35.5px;height:15px;background:#3f4042;border-radius:1px"></div>
<div class="t " style="left:539.8px;top:502.2px;font-size:6.9px;color:#fff;width:35.5px;text-align:center;">手动下料</div>
<div class="a " style="left:807px;top:498px;width:36px;height:15px;background:#3f4042;border-radius:1px"></div>
<div class="t " style="left:807px;top:502.2px;font-size:6.9px;color:#fff;width:36px;text-align:center;">程序选择</div>
<div class="t " style="left:853px;top:502.2px;font-size:6.9px;color:#fff;letter-spacing:-0.15px">生产计划：未启用</div>
<div class="a " style="left:326.5px;top:514px;width:587px;height:13.5px;background:#2e2f31;border-top:1px solid #55565a"></div>
<div class="t " style="left:331px;top:518px;font-size:7px;color:#fff;font-weight:bold">状态</div>
<div class="t " style="left:455px;top:518px;font-size:7px;color:#fff;font-weight:bold">程序名</div>
<div class="t " style="left:604px;top:518px;font-size:7px;color:#fff;font-weight:bold">材料/厚度</div>
<div class="t " style="left:690px;top:518px;font-size:7px;color:#fff;font-weight:bold">管材大小</div>
<div class="t " style="left:795px;top:518px;font-size:7px;color:#fff;font-weight:bold">工艺文件</div>
<div class="t " style="left:860px;top:518px;font-size:7px;color:#fff;font-weight:bold;width:46.7px;text-align:right">完成/需求</div>
<div class="a " style="left:913px;top:497px;width:1px;height:103px;background:#55565a"></div>
<div class="a " style="left:914px;top:496px;width:7px;height:104px;background:#333436"></div>
<div class="a " style="left:921px;top:32px;width:159px;height:568px;background:#333436"></div>
<div class="a d" style="left:921px;top:32px;width:159px;height:2px;"></div>
<div class="a " style="left:924px;top:38px;width:153.5px;height:80px;background:#2f3032;border:1px solid #e0e0e0"></div>
<div class="t " style="left:924px;top:43.5px;font-size:7.8px;color:#fff;width:153.5px;text-align:center;">机床位置</div>
<div class="a " style="left:924px;top:55px;width:153.5px;height:1px;background:#d8d8d8"></div>
<div class="a " style="left:924px;top:71px;width:153.5px;height:1px;background:#d8d8d8"></div>
<div class="a " style="left:924px;top:86.5px;width:153.5px;height:1px;background:#d8d8d8"></div>
<div class="a " style="left:924px;top:102px;width:153.5px;height:1px;background:#d8d8d8"></div>
<svg style="left:1073px;top:52px" width="3" height="3" viewBox="0 0 3 3"><path d="M3 0v3H0Z" fill="#fff"/></svg>
<div class="t mono" style="left:924px;top:60.199999999999996px;font-size:7.4px;color:#f0f0f0;width:153.5px;text-align:center;">X-00009.277</div>
<div class="t mono" style="left:924px;top:75.7px;font-size:7.4px;color:#f0f0f0;width:153.5px;text-align:center;">Y+00030.000</div>
<div class="t mono" style="left:924px;top:91.2px;font-size:7.4px;color:#f0f0f0;width:153.5px;text-align:center;">Z+00020.000</div>
<div class="t mono" style="left:924px;top:106.7px;font-size:7.4px;color:#f0f0f0;width:153.5px;text-align:center;">A+00090.000</div>
<div class="a " style="left:924.6px;top:121px;width:33.6px;height:33.6px;background:#444547;border-radius:1.500px;border:1px dotted #5f6062;"></div>
<div class="a " style="left:964.2px;top:121px;width:33.6px;height:33.6px;background:#444547;border-radius:1.500px;"></div>
<div class="a " style="left:1003.5px;top:121px;width:33.6px;height:33.6px;background:#444547;border-radius:1.500px;"></div>
<div class="a " style="left:1043.5px;top:121px;width:33.6px;height:33.6px;background:#444547;border-radius:1.500px;"></div>
<div class="a " style="left:924.6px;top:158px;width:33.6px;height:33.6px;background:#444547;border-radius:1.500px;"></div>
<div class="a " style="left:964.2px;top:158px;width:33.6px;height:33.6px;background:#444547;border-radius:1.500px;"></div>
<div class="a " style="left:1003.5px;top:158px;width:33.6px;height:33.6px;background:#444547;border-radius:1.500px;"></div>
<div class="a " style="left:1043.5px;top:158px;width:33.6px;height:33.6px;background:#444547;border-radius:1.500px;"></div>
<div class="a " style="left:924.6px;top:195px;width:33.6px;height:33.6px;background:#444547;border-radius:1.500px;border:1px dotted #5f6062;"></div>
<div class="a " style="left:964.2px;top:195px;width:33.6px;height:33.6px;background:#444547;border-radius:1.500px;"></div>
<div class="a " style="left:1003.5px;top:195px;width:33.6px;height:33.6px;background:#444547;border-radius:1.500px;"></div>
<div class="a " style="left:1043.5px;top:195px;width:33.6px;height:33.6px;background:#444547;border-radius:1.500px;"></div>
<svg style="left:924.6px;top:121px" width="33.6" height="33.6" viewBox="0 0 33.600 33.600"><path d="M21.59 11.11A7.3 7.3 0 0 0 9.62 16.19" fill="none" stroke="#fff" stroke-width="1.7"/><path d="M10.34 19.90L7.45 15.71L11.83 16.17Z" fill="#fff"/><path d="M12.21 22.29A7.3 7.3 0 0 0 24.18 17.21" fill="none" stroke="#fff" stroke-width="1.7"/><path d="M23.46 13.50L26.35 17.69L21.97 17.23Z" fill="#fff"/><text x="16.9" y="20.0" font-size="9.2" font-weight="bold" fill="#fff" text-anchor="middle" font-family="Liberation Sans,sans-serif">A</text></svg>
<svg style="left:924.6px;top:195px" width="33.6" height="33.6" viewBox="0 0 33.600 33.600"><path d="M12.21 11.11A7.3 7.3 0 0 1 24.18 16.19" fill="none" stroke="#fff" stroke-width="1.7"/><path d="M23.46 19.90L26.35 15.71L21.97 16.17Z" fill="#fff"/><path d="M21.59 22.29A7.3 7.3 0 0 1 9.62 17.21" fill="none" stroke="#fff" stroke-width="1.7"/><path d="M10.34 13.50L7.45 17.69L11.83 17.23Z" fill="#fff"/><text x="16.9" y="20.0" font-size="9.2" font-weight="bold" fill="#fff" text-anchor="middle" font-family="Liberation Sans,sans-serif">A</text></svg>
<svg style="left:964.2px;top:121px" width="33.6" height="33.6" viewBox="0 0 33.600 33.600"><path d="M16.900 11.800L25.100 22.200H8.700Z" fill="#fff"/></svg>
<svg style="left:1043.5px;top:121px" width="33.6" height="33.6" viewBox="0 0 33.600 33.600"><path d="M16.900 11.800L25.100 22.200H8.700Z" fill="#fff"/></svg>
<svg style="left:964.2px;top:195px" width="33.6" height="33.6" viewBox="0 0 33.600 33.600"><path d="M16.900 22.900L25.100 12.200H8.700Z" fill="#fff"/></svg>
<svg style="left:1043.5px;top:195px" width="33.6" height="33.6" viewBox="0 0 33.600 33.600"><path d="M16.900 22.900L25.100 12.200H8.700Z" fill="#fff"/></svg>
<svg style="left:924.6px;top:158px" width="33.6" height="33.6" viewBox="0 0 33.600 33.600"><path d="M10.500 16.800L21 8.500V25Z" fill="#fff"/></svg>
<svg style="left:1003.5px;top:158px" width="33.6" height="33.6" viewBox="0 0 33.600 33.600"><path d="M23 16.800L12.500 8.500V25Z" fill="#fff"/></svg>
<div class="t " style="left:963.7px;top:170.3px;font-size:9.5px;color:#fff;width:33.6px;text-align:center;font-weight:bold">慢速</div>
<div class="t " style="left:1043.5px;top:168.3px;font-size:13px;color:#fff;width:33.6px;text-align:center;font-weight:bold">X</div>
<svg style="left:1068.2px;top:183px" width="9" height="9" viewBox="0 0 9 9"><path d="M9 0v9H0Z" fill="#fff"/></svg>
<svg style="left:1003.5px;top:121px" width="33.6" height="33.6" viewBox="0 0 33.600 33.600"><path d="M9.800 10.400h9l1 1.200-1.500 3.600h-8l-1.500-3.600Z" fill="#fff"/><rect x="12.100" y="12" width="4.400" height="1.300" rx="0.600" fill="#555"/><path d="M11 15.800h6.600l-.7 2.100h-5.200Z" fill="#fff"/><path d="M11.800 18.800h5l-2.500 4.300Z" fill="#fff"/><path d="M23.800 11.500v12" stroke="#1c1c1c" stroke-width="1.200" stroke-dasharray="1.600 1"/><circle cx="23.800" cy="13.900" r="1.150" fill="#fff"/></svg>
<svg style="left:1003.5px;top:195px" width="33.6" height="33.6" viewBox="0 0 33.600 33.600"><path d="M9.800 10.400h9l1 1.200-1.500 3.600h-8l-1.500-3.600Z" fill="#fff"/><rect x="12.100" y="12" width="4.400" height="1.300" rx="0.600" fill="#555"/><path d="M11 15.800h6.600l-.7 2.100h-5.200Z" fill="#fff"/><path d="M11.800 18.800h5l-2.500 4.300Z" fill="#fff"/><path d="M23.800 10.500v10" stroke="#2a2a2a" stroke-width="1.100" stroke-dasharray="1.600 1"/><circle cx="23.800" cy="21.200" r="1.150" fill="#fff"/><circle cx="23.800" cy="23" r="0.800" fill="#1c1c1c"/></svg>
<div class="a " style="left:924.6px;top:233.6px;width:33.6px;height:33.6px;background:#444547;border-radius:1.500px"></div>
<div class="a " style="left:934px;top:248px;width:16px;height:5px;background:#fff"></div>
<div class="a " style="left:1042px;top:233.6px;width:33.6px;height:33.6px;background:#444547;border-radius:1.500px"></div>
<div class="a " style="left:1051.2px;top:248.1px;width:15.5px;height:5px;background:#fff"></div>
<div class="a " style="left:1056.4px;top:242.5px;width:5px;height:16px;background:#fff"></div>
<div class="t " style="left:962px;top:235.3px;font-size:8.7px;color:#fff;width:76px;text-align:center;font-weight:bold">100%</div>
<div class="a " style="left:962.2px;top:246px;width:56.2px;height:10.7px;background:#12a51e"></div>
<div class="a " style="left:1018.4px;top:246px;width:6px;height:10.7px;background:#f4f4f4;border-radius:1px"></div>
<div class="a " style="left:1024.4px;top:246px;width:11.6px;height:10.7px;background:#8e8f94;border-radius:0 1.500px 1.500px 0"></div>
<div class="a " style="left:962.5px;top:261px;width:0.8px;height:5.5px;background:#a0a0a0"></div>
<div class="a " style="left:968.83px;top:261px;width:0.8px;height:3.5px;background:#a0a0a0"></div>
<div class="a " style="left:975.16px;top:261px;width:0.8px;height:3.5px;background:#a0a0a0"></div>
<div class="a " style="left:981.49px;top:261px;width:0.8px;height:3.5px;background:#a0a0a0"></div>
<div class="a " style="left:987.82px;top:261px;width:0.8px;height:3.5px;background:#a0a0a0"></div>
<div class="a " style="left:994.15px;top:261px;width:0.8px;height:5.5px;background:#a0a0a0"></div>
<div class="a " style="left:1000.48px;top:261px;width:0.8px;height:3.5px;background:#a0a0a0"></div>
<div class="a " style="left:1006.81px;top:261px;width:0.8px;height:3.5px;background:#a0a0a0"></div>
<div class="a " style="left:1013.14px;top:261px;width:0.8px;height:3.5px;background:#a0a0a0"></div>
<div class="a " style="left:1019.47px;top:261px;width:0.8px;height:3.5px;background:#a0a0a0"></div>
<div class="a " style="left:1025.8px;top:261px;width:0.8px;height:5.5px;background:#e8483a"></div>
<div class="a " style="left:1032.13px;top:261px;width:0.8px;height:3.5px;background:#a0a0a0"></div>
<div class="a " style="left:1038.46px;top:261px;width:0.8px;height:3.5px;background:#a0a0a0"></div>
<div class="t " style="left:925px;top:276.3px;font-size:8.2px;color:#fff;">焦点</div>
<div class="a " style="left:949.5px;top:274.2px;width:31px;height:12.5px;background:#fff"></div>
<div class="t " style="left:951.2px;top:276.4px;font-size:8.2px;color:#777;letter-spacing:-0.3px">0.0</div>
<div class="a " style="left:980.5px;top:274.2px;width:11px;height:12.5px;background:#47484a;border:1px solid #6a6b6d"></div>
<svg style="left:983px;top:278.5px" width="6" height="4" viewBox="0 0 6 4"><path d="M0.300 0.300h5.400L3 3.700Z" fill="#fff"/></svg>
<div class="a " style="left:995.3px;top:273.8px;width:13.8px;height:13.4px;background:#47484a;border:1px dotted #5f6062"></div>
<svg style="left:998.6999999999999px;top:277.0px" width="7" height="7" viewBox="0 0 7 7"><circle cx="3.500" cy="3.500" r="2.600" fill="none" stroke="#fff" stroke-width="0.800"/><circle cx="3.500" cy="3.500" r="0.900" fill="#fff"/></svg>
<div class="a " style="left:1012.4px;top:273.8px;width:13.8px;height:13.4px;background:#47484a;border:1px dotted #5f6062"></div>
<svg style="left:1015.8px;top:277.0px" width="7" height="7" viewBox="0 0 7 7"><circle cx="3.500" cy="3.500" r="3" fill="#fff"/><path d="M1.800 3.500h3.400" stroke="#444" stroke-width="0.900"/></svg>
<div class="a " style="left:1029.5px;top:273.8px;width:13.8px;height:13.4px;background:#47484a;border:1px dotted #5f6062"></div>
<svg style="left:1032.9px;top:277.0px" width="7" height="7" viewBox="0 0 7 7"><circle cx="3.500" cy="3.500" r="3" fill="#fff"/><path d="M1.800 3.500h3.400M3.500 1.800v3.400" stroke="#444" stroke-width="0.900"/></svg>
<div class="a " style="left:1046.5px;top:273.8px;width:13.8px;height:13.4px;background:#47484a;border:1px dotted #5f6062"></div>
<svg style="left:1049.9px;top:277.0px" width="7" height="7" viewBox="0 0 7 7"><circle cx="3.500" cy="3.500" r="3" fill="#fff"/><path d="M2 3.500a1.500 1.500 0 1 0 1.500-1.500" fill="none" stroke="#444" stroke-width="0.800"/></svg>
<div class="a " style="left:1063.2px;top:273.8px;width:13.8px;height:13.4px;background:#47484a;border:1px dotted #5f6062"></div>
<svg style="left:1067.1000000000001px;top:277.5px" width="6" height="6" viewBox="0 0 6 6"><path d="M1 1l4 4M5 1L1 5" stroke="#e8483a" stroke-width="1.100"/></svg>
<div class="a " style="left:926px;top:295.3px;width:8.7px;height:8.7px;border:1px solid #9a9a9a;background:#303133"></div>
<div class="t " style="left:937.8px;top:296px;font-size:7.9px;color:#fff;">步进</div>
<div class="a d" style="left:1020.4px;top:292.3px;width:34.6px;height:13.7px;border:1px solid #e8e8e8"></div>
<div class="t " style="left:1020.4px;top:295.90000000000003px;font-size:6.8px;color:#fff;width:34.6px;text-align:center;">回原</div>
<div class="a d" style="left:1020.4px;top:311.3px;width:34.6px;height:13.7px;border:1px solid #e8e8e8"></div>
<div class="t " style="left:1020.4px;top:314.90000000000003px;font-size:6.8px;color:#fff;width:34.6px;text-align:center;">定位</div>
<svg style="left:1063.7px;top:295.0px" width="8.6" height="8.6" viewBox="0 0 10 10"><path d="M4.300 0h1.400l.25 1.250.9.380 1.050-.7 1 1-.7 1.050.38.900L9.830 4.300v1.400l-1.250.25-.38.900.7 1.050-1 1-1.050-.7-.9.380L5.700 9.830H4.300l-.25-1.250-.9-.38-1.050.7-1-1 .7-1.050-.38-.9L.170 5.700V4.300l1.250-.25.38-.9-.7-1.050 1-1 1.050.7.900-.38Z" fill="#fff"/><circle cx="5" cy="5" r="1.700" fill="#333436"/></svg>
<svg style="left:1063.7px;top:314.09999999999997px" width="8.6" height="8.6" viewBox="0 0 10 10"><path d="M4.300 0h1.400l.25 1.250.9.380 1.050-.7 1 1-.7 1.050.38.900L9.830 4.300v1.400l-1.250.25-.38.900.7 1.050-1 1-1.050-.7-.9.380L5.700 9.830H4.300l-.25-1.250-.9-.38-1.050.7-1-1 .7-1.050-.38-.9L.170 5.700V4.300l1.250-.25.38-.9-.7-1.050 1-1 1.050.7.900-.38Z" fill="#fff"/><circle cx="5" cy="5" r="1.700" fill="#333436"/></svg>
<div class="a " style="left:924px;top:311.3px;width:91px;height:13.7px;background:#fff;border:1px solid #aaa"></div>
<div class="t " style="left:927px;top:315px;font-size:6.8px;color:#333;">1-回中</div>
<div class="a " style="left:1003.4px;top:312.3px;width:10.6px;height:11.7px;background:#47484a"></div>
<svg style="left:1007px;top:317px" width="3.6" height="2.6" viewBox="0 0 3.6 2.6"><path d="M0 0h3.600L1.800 2.600Z" fill="#fff"/></svg>
<div class="a d" style="left:924.6px;top:331.4px;width:152.6px;height:14px;"></div>
<div class="t " style="left:926.6px;top:336.6px;font-size:6.8px;color:#fff;font-weight:bold">加工准备</div>
<div class="a " style="left:924px;top:347.6px;width:45.6px;height:22.3px;background:#444547;border-radius:2px"></div>
<div class="t " style="left:924px;top:355.89px;font-size:9px;color:#fff;width:45.6px;text-align:center;">激光开启</div>
<div class="a " style="left:978.3px;top:347.6px;width:45.1px;height:22.3px;background:#444547;border-radius:2px"></div>
<div class="t " style="left:978.3px;top:355.89px;font-size:9px;color:#fff;width:45.1px;text-align:center;">红光</div>
<div class="t " style="left:1032.5px;top:355.89px;font-size:9px;color:#6f7072;width:44.1px;text-align:center;">光闸</div>
<div class="a " style="left:924.6px;top:373.1px;width:30px;height:22.3px;background:#444547;border-radius:2px"></div>
<div class="t " style="left:924.6px;top:381.39px;font-size:9px;color:#fff;width:30px;text-align:center;">吹气</div>
<svg style="left:925.6px;top:374.6px" width="3" height="3" viewBox="0 0 3 3"><path d="M0 0h2.600L0 2.600Z" fill="#2ec03a"/></svg>
<svg style="left:955.8px;top:379.3px" width="10.0" height="10.0" viewBox="0 0 10 10"><path d="M4.300 0h1.400l.25 1.250.9.380 1.050-.7 1 1-.7 1.050.38.900L9.830 4.300v1.400l-1.250.25-.38.900.7 1.050-1 1-1.050-.7-.9.380L5.700 9.830H4.300l-.25-1.250-.9-.38-1.050.7-1-1 .7-1.050-.38-.9L.170 5.700V4.300l1.250-.25.38-.9-.7-1.050 1-1 1.050.7.900-.38Z" fill="#fff"/><circle cx="5" cy="5" r="1.700" fill="#333436"/></svg>
<div class="a " style="left:978.3px;top:373.1px;width:45.1px;height:22.3px;background:#444547;border-radius:2px"></div>
<div class="t " style="left:978.3px;top:381.39px;font-size:9px;color:#fff;width:45.1px;text-align:center;">空气</div>
<svg style="left:1016.9px;top:388.90000000000003px" width="5.5" height="5.5" viewBox="0 0 5.5 5.5"><path d="M5.500 0v5.500H0Z" fill="#fff"/></svg>
<div class="a " style="left:1032.5px;top:373.1px;width:29.5px;height:22.3px;background:#444547;border-radius:2px"></div>
<div class="t " style="left:1032.5px;top:381.39px;font-size:9px;color:#fff;width:29.5px;text-align:center;">点射</div>
<svg style="left:1033.5px;top:374.6px" width="3" height="3" viewBox="0 0 3 3"><path d="M0 0h2.600L0 2.600Z" fill="#2ec03a"/></svg>
<svg style="left:1063.0px;top:379.3px" width="10.0" height="10.0" viewBox="0 0 10 10"><path d="M4.300 0h1.400l.25 1.250.9.380 1.050-.7 1 1-.7 1.050.38.900L9.830 4.300v1.400l-1.250.25-.38.900.7 1.050-1 1-1.050-.7-.9.380L5.700 9.830H4.300l-.25-1.250-.9-.38-1.050.7-1-1 .7-1.050-.38-.9L.170 5.700V4.300l1.250-.25.38-.9-.7-1.050 1-1 1.050.7.900-.38Z" fill="#fff"/><circle cx="5" cy="5" r="1.700" fill="#333436"/></svg>
<div class="a " style="left:924.6px;top:398.6px;width:30px;height:22.3px;background:#444547;border-radius:2px"></div>
<div class="t " style="left:924.6px;top:406.89px;font-size:9px;color:#fff;width:30px;text-align:center;">标定</div>
<svg style="left:925.6px;top:400.1px" width="3" height="3" viewBox="0 0 3 3"><path d="M0 0h2.600L0 2.600Z" fill="#2ec03a"/></svg>
<svg style="left:955.8px;top:404.8px" width="10.0" height="10.0" viewBox="0 0 10 10"><path d="M4.300 0h1.400l.25 1.250.9.380 1.050-.7 1 1-.7 1.050.38.900L9.830 4.300v1.400l-1.250.25-.38.900.7 1.050-1 1-1.050-.7-.9.380L5.700 9.830H4.300l-.25-1.250-.9-.38-1.050.7-1-1 .7-1.050-.38-.9L.170 5.700V4.300l1.250-.25.38-.9-.7-1.050 1-1 1.050.7.900-.38Z" fill="#fff"/><circle cx="5" cy="5" r="1.700" fill="#333436"/></svg>
<div class="a " style="left:978.3px;top:398.6px;width:29.7px;height:22.3px;background:#444547;border-radius:2px"></div>
<div class="t " style="left:978.3px;top:406.89px;font-size:9px;color:#fff;width:29.7px;text-align:center;">跟随</div>
<svg style="left:979.3px;top:400.1px" width="3" height="3" viewBox="0 0 3 3"><path d="M0 0h2.600L0 2.600Z" fill="#2ec03a"/></svg>
<svg style="left:1009.4px;top:404.8px" width="10.0" height="10.0" viewBox="0 0 10 10"><path d="M4.300 0h1.400l.25 1.250.9.380 1.050-.7 1 1-.7 1.050.38.900L9.830 4.300v1.400l-1.250.25-.38.900.7 1.050-1 1-1.050-.7-.9.380L5.700 9.830H4.300l-.25-1.250-.9-.38-1.050.7-1-1 .7-1.050-.38-.9L.170 5.700V4.300l1.250-.25.38-.9-.7-1.050 1-1 1.050.7.900-.38Z" fill="#fff"/><circle cx="5" cy="5" r="1.700" fill="#333436"/></svg>
<div class="a " style="left:1032.5px;top:398.6px;width:44.1px;height:22.3px;background:#444547;border-radius:2px"></div>
<div class="t " style="left:1032.5px;top:406.89px;font-size:9px;color:#fff;width:44.1px;text-align:center;">界面急停</div>
<div class="a d" style="left:924.6px;top:429.4px;width:152.6px;height:12.5px;"></div>
<div class="t " style="left:926.6px;top:433.2px;font-size:6.8px;color:#fff;font-weight:bold">加工控制</div>
<svg style="left:966.6px;top:430.79999999999995px" width="9.200000000000001" height="9.200000000000001" viewBox="0 0 10 10"><path d="M4.300 0h1.400l.25 1.250.9.380 1.050-.7 1 1-.7 1.050.38.900L9.830 4.300v1.400l-1.250.25-.38.900.7 1.050-1 1-1.050-.7-.9.380L5.700 9.830H4.300l-.25-1.250-.9-.38-1.050.7-1-1 .7-1.050-.38-.9L.170 5.700V4.300l1.250-.25.38-.9-.7-1.050 1-1 1.050.7.900-.38Z" fill="#fff"/><circle cx="5" cy="5" r="1.700" fill="#1b1b1d"/></svg>
<div class="a " style="left:924px;top:445px;width:45.7px;height:22px;background:#444547;border-radius:2px"></div>
<div class="t " style="left:924px;top:453.14px;font-size:9px;color:#fff;width:45.7px;text-align:center;"></div>
<div class="a " style="left:1032.5px;top:445px;width:44.5px;height:22px;background:#444547;border-radius:2px"></div>
<div class="t " style="left:1032.5px;top:453.14px;font-size:9px;color:#fff;width:44.5px;text-align:center;"></div>
<svg style="left:941px;top:450px" width="12" height="12" viewBox="0 0 12 12"><path d="M2.500 1L10.500 6 2.500 11Z" fill="#16c11f"/></svg>
<svg style="left:996px;top:450.5px" width="10" height="11" viewBox="0 0 10 11"><rect x="1.500" y="0.500" width="2.300" height="10" fill="#77787a"/><rect x="6" y="0.500" width="2.300" height="10" fill="#77787a"/></svg>
<svg style="left:1050px;top:450.5px" width="9" height="11" viewBox="0 0 9 11"><rect x="0.800" y="0.500" width="7.400" height="9.500" rx="1.200" fill="#c9371f"/></svg>
<div class="t " style="left:924px;top:478.34px;font-size:9px;color:#6f7072;width:45.7px;text-align:center;">回退</div>
<div class="a " style="left:979px;top:470.4px;width:43.8px;height:21.6px;border:1px dotted #505153"></div>
<svg style="left:995px;top:476px" width="12" height="10" viewBox="0 0 12 10"><rect x="1" y="0.800" width="2" height="8.400" fill="#77787a"/><path d="M4.500 0.800L10.500 5 4.500 9.200Z" fill="#77787a"/></svg>
<div class="t " style="left:1032.5px;top:478.34px;font-size:9px;color:#6f7072;width:44.5px;text-align:center;">前进</div>
<div class="a " style="left:924px;top:496px;width:45.7px;height:22.2px;background:#444547;border-radius:2px"></div>
<div class="t " style="left:924px;top:504.24px;font-size:9px;color:#fff;width:45.7px;text-align:center;">清除报警</div>
<div class="t " style="left:979px;top:504.24px;font-size:9px;color:#6f7072;width:43.8px;text-align:center;">断点定位</div>
<div class="a " style="left:1032.5px;top:496px;width:44.5px;height:22.2px;background:#444547;border-radius:2px"></div>
<div class="t " style="left:1032.5px;top:504.24px;font-size:9px;color:#fff;width:44.5px;text-align:center;">高级进入</div>
<div class="a " style="left:924px;top:521.5px;width:45.7px;height:22.2px;background:#444547;border-radius:2px"></div>
<div class="t " style="left:924px;top:529.74px;font-size:9px;color:#fff;width:45.7px;text-align:center;">手动定中</div>
<div class="t " style="left:979px;top:529.74px;font-size:9px;color:#6f7072;width:43.8px;text-align:center;">自动寻中</div>
<div class="a " style="left:1032.5px;top:521.5px;width:44.5px;height:22.2px;background:#444547;border-radius:2px"></div>
<div class="t " style="left:1032.5px;top:529.74px;font-size:9px;color:#fff;width:44.5px;text-align:center;">空运行</div>
<div class="a " style="left:924.7px;top:552px;width:152px;height:33px;background:#444547;border:1px dotted #5c5d5f"></div>
<svg style="left:993.5px;top:561.5px" width="14" height="14" viewBox="0 0 14 14"><path d="M11.200 4.200A5.200 5.200 0 1 0 12.200 7.500" fill="none" stroke="#fff" stroke-width="1.700"/><path d="M12.800 1v5h-5Z" fill="#fff"/></svg>
</body></html>
